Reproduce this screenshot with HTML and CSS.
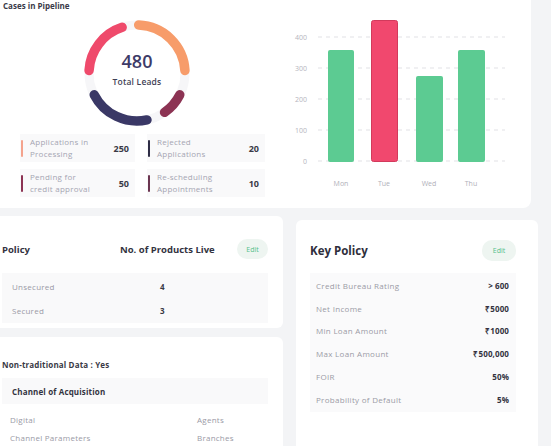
FILE: index.html
```html
<!DOCTYPE html>
<html>
<head>
<meta charset="utf-8">
<link rel="stylesheet" href="styles.css">
</head>
<body>
<div class="page">
  <section class="card top-card">
    <div class="pipeline">
      <h2 class="title">Cases in Pipeline</h2>
      <svg class="donut" width="112" height="112" viewBox="0 0 112 112">
        <circle cx="56" cy="56" r="48" fill="none" stroke="#f6f6f8" stroke-width="9"/>
        <path d="M8.07 53.49 A48 48 0 0 1 41.17 10.35" stroke="#ef4a6b"/>
        <path d="M57.68 8.03 A48 48 0 0 1 103.93 53.49" stroke="#f79c6a"/>
        <path d="M98.77 77.79 A48 48 0 0 1 83.53 95.32" stroke="#8c3353"/>
        <path d="M65.98 102.95 A48 48 0 0 1 13.23 77.79" stroke="#3a3866"/>
        <text x="56" y="51" class="big">480</text>
        <text x="56" y="68" class="sub">Total Leads</text>
      </svg>
      <div class="legend">
        <div class="leg"><span class="bar c1"></span><span class="lt">Applications in<br>Processing</span><b>250</b></div>
        <div class="leg"><span class="bar c2"></span><span class="lt">Rejected<br>Applications</span><b>20</b></div>
        <div class="leg"><span class="bar c3"></span><span class="lt">Pending for<br>credit approval</span><b>50</b></div>
        <div class="leg"><span class="bar c4"></span><span class="lt">Re-scheduling<br>Appointments</span><b>10</b></div>
      </div>
    </div>
    <svg class="chart" width="251" height="208" viewBox="0 0 251 208">
      <g class="grid">
        <line x1="38" y1="37" x2="225" y2="37"/>
        <line x1="38" y1="68" x2="225" y2="68"/>
        <line x1="38" y1="99" x2="225" y2="99"/>
        <line x1="38" y1="130" x2="225" y2="130"/>
        <line x1="38" y1="161" x2="225" y2="161"/>
      </g>
      <g class="ylab">
        <text x="27" y="39.5">400</text>
        <text x="27" y="70.5">300</text>
        <text x="27" y="101.5">200</text>
        <text x="27" y="132.5">100</text>
        <text x="27" y="163.5">0</text>
      </g>
      <rect x="48" y="50" width="26" height="112" rx="2" fill="#5ccb92"/>
      <rect x="91.5" y="20.5" width="26" height="141" rx="2" fill="#f1486e" stroke="#d23a5c" stroke-width="1"/>
      <rect x="136" y="76" width="27" height="86" rx="2" fill="#5ccb92"/>
      <rect x="178" y="50" width="27" height="112" rx="2" fill="#5ccb92"/>
      <g class="xlab">
        <text x="61" y="186">Mon</text>
        <text x="104" y="186">Tue</text>
        <text x="149" y="186">Wed</text>
        <text x="191" y="186">Thu</text>
      </g>
    </svg>
  </section>

  <div class="bottom">
    <div class="left-col">
      <section class="card policy-card">
        <div class="policy-head">
          <span class="h-policy">Policy</span>
          <span class="h-live">No. of Products Live</span>
          <span class="edit">Edit</span>
        </div>
        <div class="ptable">
          <div class="prow"><span class="pl">Unsecured</span><span class="pv">4</span></div>
          <div class="prow"><span class="pl">Secured</span><span class="pv">3</span></div>
        </div>
      </section>
      <section class="card nt-card">
        <div class="nt-title">Non-traditional Data : Yes</div>
        <div class="channel">Channel of Acquisition</div>
        <div class="crow"><span>Digital</span><span>Agents</span></div>
        <div class="crow"><span>Channel Parameters</span><span>Branches</span></div>
      </section>
    </div>
    <section class="card key-card">
      <div class="key-head">
        <span class="key-title">Key Policy</span>
        <span class="edit edit-k">Edit</span>
      </div>
      <div class="ktable">
        <div class="krow"><span>Credit Bureau Rating</span><b>&gt; 600</b></div>
        <div class="krow"><span>Net Income</span><b>₹5000</b></div>
        <div class="krow"><span>Min Loan Amount</span><b>₹1000</b></div>
        <div class="krow"><span>Max Loan Amount</span><b>₹500,000</b></div>
        <div class="krow"><span>FOIR</span><b>50%</b></div>
        <div class="krow"><span>Probability of Default</span><b>5%</b></div>
      </div>
    </section>
  </div>
</div>
</body>
</html>
```
FILE: styles.css
```css
* { box-sizing: border-box; }
html, body { margin: 0; padding: 0; }
body {
  width: 551px;
  height: 446px;
  overflow: hidden;
  background: #f3f4f6;
  font-family: "Open Sans", "Liberation Sans", sans-serif;
  color: #33333f;
}
.page {
  display: flex;
  flex-direction: column;
  gap: 8px;
}
.card {
  background: #ffffff;
  border-radius: 0 0 6px 0;
}
.top-card {
  width: 531px;
  height: 208px;
  display: flex;
  border-radius: 0 0 8px 0;
}
.pipeline {
  width: 280px;
  display: flex;
  flex-direction: column;
}
.title {
  margin: 0;
  padding: 1px 0 0 3px;
  font-size: 8px;
  line-height: 10px;
  font-weight: 700;
  color: #3a3a48;
}
.donut {
  margin: 6px 0 0 81px;
  display: block;
}
.donut path {
  fill: none;
  stroke-width: 9.5;
  stroke-linecap: round;
}
.donut .big {
  font-size: 18px;
  font-weight: 600;
  fill: #3d3b68;
  text-anchor: middle;
}
.donut .sub {
  font-size: 8.5px;
  font-weight: 600;
  fill: #3f3f55;
  text-anchor: middle;
  letter-spacing: 0.2px;
}
.legend {
  margin: 5px 0 0 20px;
  display: grid;
  grid-template-columns: 115px 118px;
  column-gap: 12px;
  row-gap: 7px;
}
.leg {
  height: 28px;
  background: #f9f9fa;
  display: flex;
  align-items: center;
  padding: 0 6px 0 1px;
}
.leg .bar {
  width: 2px;
  height: 17px;
  border-radius: 1px;
  margin-right: 7px;
}
.c1 { background: #f4a38d; }
.c2 { background: #2e2d45; }
.c3 { background: #8c3353; }
.c4 { background: #6b3550; }
.leg .lt {
  flex: 1;
  font-size: 8px;
  letter-spacing: 0.25px;
  line-height: 12px;
  color: #a5a5b2;
}
.leg b {
  font-size: 9px;
  font-weight: 700;
  color: #3a3a46;
}
.chart { display: block; }
.grid line {
  stroke: #d9d9de;
  stroke-width: 0.8;
  stroke-dasharray: 4 4;
}
.ylab text {
  font-size: 7px;
  fill: #b5b5be;
  text-anchor: end;
}
.xlab text {
  font-size: 7px;
  fill: #b0b0b9;
  text-anchor: middle;
}

.bottom {
  display: flex;
  gap: 13px;
}
.left-col {
  width: 283px;
  display: flex;
  flex-direction: column;
  gap: 9px;
}
.policy-card {
  height: 112px;
  padding: 23px 15px 0 2px;
  border-radius: 0 6px 6px 0;
}
.policy-head {
  display: flex;
  align-items: center;
  height: 20px;
}
.h-policy {
  width: 118px;
  font-size: 9.5px;
  font-weight: 700;
  color: #33333f;
}
.h-live {
  flex: 1;
  font-size: 9.5px;
  font-weight: 700;
  color: #33333f;
}
.edit {
  width: 31px;
  height: 20px;
  border-radius: 10px;
  background: #eef5f1;
  color: #55c08b;
  font-size: 7px;
  display: flex;
  align-items: center;
  justify-content: center;
}
.ptable {
  margin-top: 14px;
  background: #f9f9fa;
  padding: 1px 0;
}
.prow {
  display: flex;
  height: 24px;
  align-items: center;
}
.pl {
  width: 158px;
  padding-left: 10px;
  font-size: 8px;
  letter-spacing: 0.25px;
  color: #9a9aa6;
}
.pv {
  font-size: 8px;
  font-weight: 700;
  color: #3a3a46;
}
.nt-card {
  flex: 1;
  padding: 22px 15px 0 2px;
  border-radius: 0 6px 0 0;
}
.nt-title {
  font-size: 8px;
  letter-spacing: 0.15px;
  font-weight: 700;
  color: #3a3a46;
  height: 12px;
  line-height: 12px;
}
.channel {
  margin-top: 7px;
  height: 26px;
  background: #f9f9fa;
  display: flex;
  align-items: center;
  padding-left: 10px;
  font-size: 8px;
  letter-spacing: 0.15px;
  font-weight: 700;
  color: #33333f;
}
.crow {
  display: flex;
  height: 18px;
  align-items: center;
  padding-left: 8px;
  font-size: 8px;
  letter-spacing: 0.25px;
  color: #9a9aa6;
}
.channel + .crow { margin-top: 6px; }
.crow span:first-child { width: 187px; }

.key-card {
  width: 242px;
  margin-top: 4px;
  padding: 20px 22px 0 14px;
  border-radius: 6px 6px 0 0;
}
.key-head {
  display: flex;
  align-items: center;
  justify-content: space-between;
  height: 21px;
}
.key-title {
  font-size: 11.5px;
  font-weight: 700;
  color: #2f2f3c;
}
.edit-k { width: 34px; height: 21px; }
.ktable {
  margin-top: 12px;
  background: #fafafb;
  padding: 1px 7px 1px 6px;
}
.krow {
  display: flex;
  justify-content: space-between;
  align-items: center;
  height: 22.8px;
  font-size: 8px;
  letter-spacing: 0.3px;
}
.krow span { color: #9a9aa6; }
.krow b { font-weight: 700; color: #33333f; letter-spacing: 0.1px; }
```
